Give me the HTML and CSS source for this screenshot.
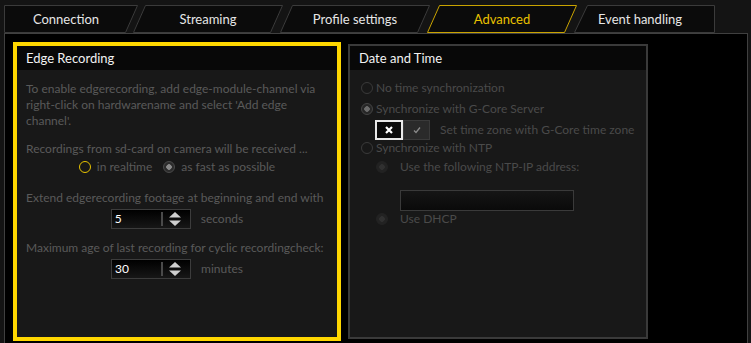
FILE: index.html
```html
<!DOCTYPE html>
<html>
    <head>
        <title>Advanced</title>
        <link rel="stylesheet" href="styles.css">
    </head>
    <body>
        <div class="tabs">
            <div class="tab tabFirst">
                <svg viewBox="0 0 134 28"><polygon points="0.5,0.5 133.5,0.5 121.5,27.5 0.5,27.5"/></svg>
                <span>Connection</span>
            </div>
            <div class="tab tabSecond">
                <svg viewBox="0 0 150 28"><polygon points="12.5,0.5 149.5,0.5 137.5,27.5 0.5,27.5"/></svg>
                <span>Streaming</span>
            </div>
            <div class="tab">
                <svg viewBox="0 0 150 28"><polygon points="12.5,0.5 149.5,0.5 137.5,27.5 0.5,27.5"/></svg>
                <span>Profile settings</span>
            </div>
            <div class="tab tabActive">
                <svg viewBox="0 0 150 28"><polygon points="12.5,0.5 149.5,0.5 137.5,27.5 0.5,27.5"/></svg>
                <span>Advanced</span>
            </div>
            <div class="tab tabLast">
                <svg viewBox="0 0 141 28"><polygon points="13.5,0.5 140.5,0.5 140.5,27.5 0.5,27.5"/></svg>
                <span>Event handling</span>
            </div>
        </div>

        <div class="frame">
            <div class="panel edgePanel">
                <div class="panelHead">Edge Recording</div>
                <div class="edgeBody">
                    <p class="note">To enable edgerecording, add edge-module-channel via<br>right-click on hardwarename and select 'Add edge<br>channel'.</p>
                    <p class="label labelRecv">Recordings from sd-card on camera will be received ...</p>
                    <div class="choiceRow">
                        <span class="radio radioHot"></span><span class="choiceText">in realtime</span>
                        <span class="radio radioOn"></span><span class="choiceText">as fast as possible</span>
                    </div>
                    <p class="label labelExtend">Extend edgerecording footage at beginning and end with</p>
                    <div class="spinRow">
                        <div class="spin">
                            <span class="spinValue">5</span>
                            <span class="spinSep"></span>
                            <svg class="spinArrows" viewBox="0 0 14 16"><polygon points="7,1 13,6.5 1,6.5"/><polygon points="1,9.5 13,9.5 7,15"/></svg>
                        </div>
                        <span class="unit">seconds</span>
                    </div>
                    <p class="label labelAge">Maximum age of last recording for cyclic recordingcheck:</p>
                    <div class="spinRow">
                        <div class="spin">
                            <span class="spinValue">30</span>
                            <span class="spinSep"></span>
                            <svg class="spinArrows" viewBox="0 0 14 16"><polygon points="7,1 13,6.5 1,6.5"/><polygon points="1,9.5 13,9.5 7,15"/></svg>
                        </div>
                        <span class="unit">minutes</span>
                    </div>
                </div>
            </div>

            <div class="panel timePanel">
                <div class="panelHead">Date and Time</div>
                <div class="timeBody">
                    <div class="optRow rowNone"><span class="radio"></span><span>No time synchronization</span></div>
                    <div class="optRow rowCore"><span class="radio radioDim"></span><span>Synchronize with G-Core Server</span></div>
                    <div class="zoneRow">
                        <div class="toggle">
                            <span class="toggleOff"><svg viewBox="0 0 8 8"><path d="M1 1 L7 7 M7 1 L1 7"/></svg></span>
                            <span class="toggleOn"><svg viewBox="0 0 8 8"><path d="M1 4.5 L3 6.5 L7 1.5"/></svg></span>
                        </div>
                        <span>Set time zone with G-Core time zone</span>
                    </div>
                    <div class="optRow"><span class="radio"></span><span>Synchronize with NTP</span></div>
                    <div class="subRow rowIp"><span class="radio radioSub"></span><span>Use the following NTP-IP address:</span></div>
                    <div class="ntpInput"></div>
                    <div class="subRow"><span class="radio radioSub"></span><span>Use DHCP</span></div>
                </div>
            </div>
        </div>
    </body>
</html>
```

FILE: styles.css
```css
body{
    margin:0;
    background:#141414;
    font-family:Lato, "Open Sans", sans-serif;
    font-size:12px;
    height:343px;
    overflow:hidden;
}
p{
    margin:0;
}

/* tab strip */
.tabs{
    display:flex;
    padding:5px 0 0 4px;
    height:28px;
}
.tab{
    position:relative;
    box-sizing:border-box;
    width:150px;
    height:28px;
    margin-left:-3px;
    display:flex;
    align-items:center;
    justify-content:center;
    color:#e6e6e6;
    font-size:13px;
}
.tab svg{
    position:absolute;
    left:0;
    top:0;
    width:100%;
    height:100%;
}
.tab polygon{
    fill:#0b0b0b;
    stroke:#3b3b3b;
    stroke-width:1;
}
.tab span{
    position:relative;
}
.tabFirst{
    width:134px;
    margin-left:0;
    padding-right:10px;
}
.tabSecond{
    margin-left:-5px;
}
.tabLast{
    width:141px;
    padding-right:9px;
}
.tabActive{
    color:#e9c200;
}
.tabActive polygon{
    stroke:#c9a300;
}

/* content frame */
.frame{
    box-sizing:border-box;
    margin-left:4px;
    width:744px;
    height:310px;
    border:1px solid #404040;
    border-bottom:none;
    background:#000;
    display:flex;
    align-items:flex-start;
    gap:9px;
    padding:10px 0 0 10px;
}
.panel{
    box-sizing:border-box;
    width:300px;
    height:295px;
    border:2px solid #3a3a3a;
    background:#181818;
}
.panelHead{
    height:24px;
    line-height:24px;
    background:#080808;
    color:#f2f2f2;
    font-size:13px;
    padding-left:9px;
}

/* edge recording */
.edgePanel{
    width:324px;
    border-color:#ffd700;
    outline:2px solid #ffd700;
}
.edgeBody{
    padding:11px 9px 0 9px;
    color:#5a5a5a;
    line-height:16px;
}
.labelRecv{
    margin-top:12px;
}
.labelExtend{
    margin-top:15px;
}
.labelAge{
    margin-top:11px;
}
.choiceRow{
    display:flex;
    align-items:center;
    justify-content:center;
    height:16px;
    margin-top:2px;
}
.choiceText{
    margin-left:6px;
    margin-right:11px;
}
.choiceText:last-child{
    margin-right:0;
}
.spinRow{
    display:flex;
    align-items:center;
    justify-content:center;
    margin-top:3px;
}
.spin{
    box-sizing:border-box;
    width:80px;
    height:20px;
    border:1px solid #3c3c3c;
    background:linear-gradient(#000, #171717);
    display:flex;
    align-items:center;
}
.spinValue{
    box-sizing:border-box;
    width:49px;
    padding-left:3px;
    color:#fff;
}
.spinSep{
    width:2px;
    height:14px;
    background:#4a4a4a;
}
.spinArrows{
    width:14px;
    height:16px;
    margin-left:5px;
}
.spinArrows polygon{
    fill:#cfcfcf;
}
.unit{
    margin-left:10px;
}

/* radios */
.radio{
    box-sizing:border-box;
    flex:none;
    width:12px;
    height:12px;
    border-radius:50%;
    border:1px solid #3a3a3a;
}
.radioHot{
    border-color:#e8c400;
}
.radioOn{
    border-color:#4a4a4a;
    background:radial-gradient(circle, #8a8a8a 0 2.5px, #2c2c2c 3px);
}
.radioDim{
    border-color:#444;
    background:radial-gradient(circle, #6c6c6c 0 2.5px, #262626 3px);
}
.radioSub{
    border-color:#222;
    background:radial-gradient(circle, #303030 0 2.5px, #222 3px);
}

/* date and time */
.timeBody{
    padding:10px 0 0 11px;
    color:#4a4a4a;
    line-height:16px;
}
.optRow{
    display:flex;
    align-items:center;
    gap:3px;
    height:16px;
}
.rowCore{
    margin-top:5px;
}
.zoneRow{
    display:flex;
    align-items:center;
    margin:3px 0 0 14px;
    gap:10px;
}
.toggle{
    display:flex;
    width:55px;
    height:20px;
}
.toggleOff{
    box-sizing:border-box;
    width:28px;
    border:2px solid #e8e8e8;
    background:#0a0a0a;
    display:flex;
    align-items:center;
    justify-content:center;
}
.toggleOff svg{
    width:8px;
    height:8px;
}
.toggleOff path{
    stroke:#fff;
    stroke-width:2.2;
    fill:none;
}
.toggleOn{
    box-sizing:border-box;
    flex:1;
    border:1px solid #3a3a3a;
    background:#2a2a2a;
    display:flex;
    align-items:center;
    justify-content:center;
}
.toggleOn svg{
    width:8px;
    height:8px;
}
.toggleOn path{
    stroke:#8a8a8a;
    stroke-width:1.3;
    fill:none;
}
.subRow{
    display:flex;
    align-items:center;
    gap:12px;
    height:16px;
    margin-left:15px;
}
.rowIp{
    margin-top:3px;
}
.ntpInput{
    box-sizing:border-box;
    width:174px;
    height:21px;
    margin:15px 0 0 39px;
    border:1px solid #3a3a3a;
    background:linear-gradient(#151515, #0a0a0a);
}
```
